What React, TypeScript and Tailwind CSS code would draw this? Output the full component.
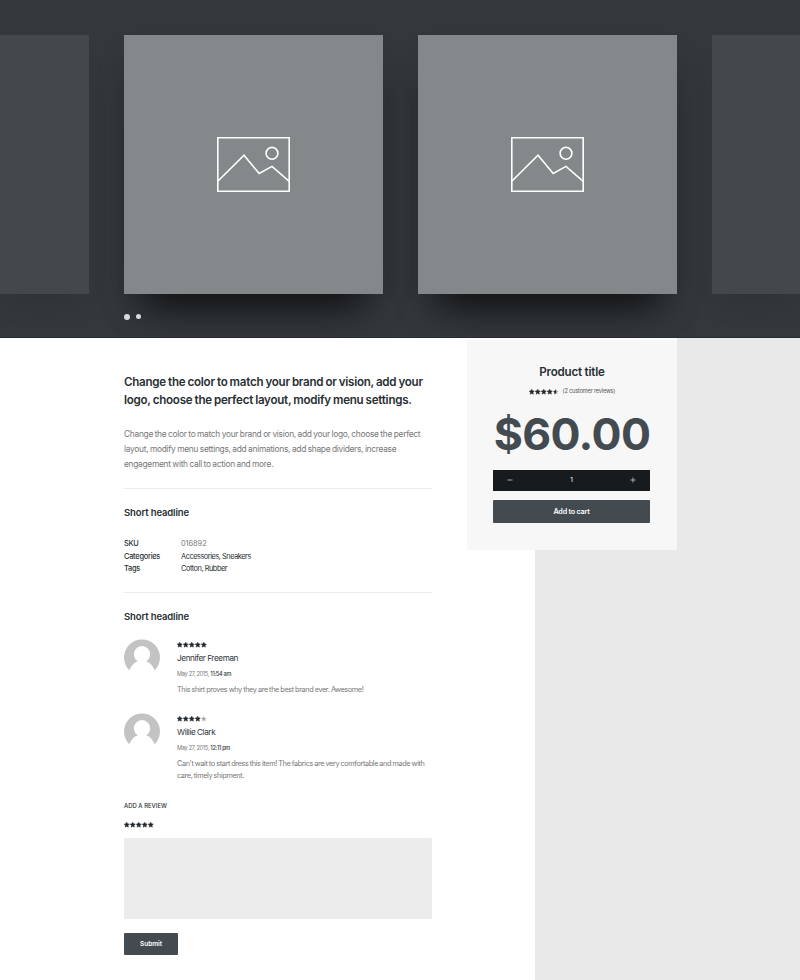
import React from "react";

const STAR = "M5 .4 6.5 3.3 9.7 3.8 7.4 6.1 7.9 9.4 5 7.9 2.1 9.4 2.6 6.1 .3 3.8 3.5 3.3Z";

function Stars({ value = 5 }: { value?: number }) {
  return (
    <span className="flex gap-[0.4px]">
      {[0, 1, 2, 3, 4].map((i) => {
        const half = value - i === 0.5;
        const off = value <= i;
        return (
          <svg key={i} viewBox="0 0 10 10" className="h-[5.5px] w-[5.5px] shrink-0 overflow-visible">
            <path
              d={STAR}
              className={off || half ? "fill-[#a5a8aa]" : "fill-[#23292d]"}
              stroke={off || half ? "none" : "#23292d"}
              strokeWidth=".9"
            />
            {half && <path d="M5.6 .4V7.9L2.1 9.4 2.6 6.1 .3 3.8 3.5 3.3Z" className="fill-[#23292d]" />}
          </svg>
        );
      })}
    </span>
  );
}

function Slide() {
  return (
    <div className="flex h-[259px] w-[259px] shrink-0 items-center justify-center bg-[#83888b] shadow-[0_30px_36px_-22px_rgba(0,0,0,0.75),0_22px_36px_-8px_rgba(0,0,0,0.18)]">
      <svg viewBox="0 0 73 55" className="h-[55px] w-[73px]" fill="none" stroke="#fff" strokeWidth="1.6">
        <path d="M.8 .8H72.2V54.2H.8Z" />
        <path d="M.8 44.3 27 18.2 42.2 36.5 55 29.4 72.2 44.3" />
        <circle cx="55" cy="16.3" r="5.9" />
      </svg>
    </div>
  );
}

function Avatar() {
  return (
    <svg viewBox="0 0 36 36" className="h-9 w-9 shrink-0 overflow-visible">
      <path
        fill="#c3c3c3"
        d="M5.4 30.3A18 18 0 1 1 30.6 30.3C29.2 26.1 26.5 23 22.4 21.2A8.2 8.2 0 1 0 13.6 21.2C9.5 23 6.8 26.1 5.4 30.3Z"
      />
    </svg>
  );
}

function Review({ name, date, time, rating, children }: { name: string; date: string; time: string; rating: number; children: React.ReactNode }) {
  return (
    <article className="flex h-[74px] gap-[17px]">
      <Avatar />
      <div className="whitespace-nowrap pt-0.5">
        <Stars value={rating} />
        <h3 className="mt-[5px] h-3 text-[8.2px] leading-3 tracking-[-0.4px] text-[#30373b] [word-spacing:-0.3px]">{name}</h3>
        <p className="mt-1 h-3 text-[5.6px] leading-3 tracking-[-0.3px] text-[#777]">
          {date}, <span className="font-medium text-[#30373b]">{time}</span>
        </p>
        <p className="mt-[3.5px] text-[7.3px] leading-[12.7px] tracking-[-0.38px] text-[#777] [word-spacing:-0.3px]">{children}</p>
      </div>
    </article>
  );
}

export default function App() {
  return (
    <div className="h-[980px] w-[800px] overflow-hidden bg-white font-['Inter',sans-serif] text-[#282f33]">
      <header className="h-[338px] overflow-hidden border-b border-[#292c31] bg-[#33383c] pt-[35px]">
        <div className="flex gap-[35px]">
          <div className="h-[259px] w-[89px] shrink-0 bg-[#43484b] shadow-[0_18px_30px_-10px_rgba(0,0,0,0.1)]" />
          <Slide />
          <Slide />
          <div className="h-[259px] w-[89px] shrink-0 bg-[#43484b] shadow-[0_18px_30px_-10px_rgba(0,0,0,0.1)]" />
        </div>
        <div className="relative ml-[124px] mt-[19.5px] flex items-center gap-[6px]">
          <i className="h-1.5 w-1.5 rounded-full bg-[#d8dcde]" />
          <i className="h-[5px] w-[5px] rounded-full bg-[#d8dcde]" />
        </div>
      </header>

      <main className="flex h-[642px] bg-[#e9e9e9]">
        <section className="w-[535px] shrink-0 bg-white pl-[124px]">
          <div className="w-[308px] whitespace-nowrap">
            <h1 className="pt-[36px] text-[11.6px] font-semibold leading-[17.5px] tracking-[-0.26px] [word-spacing:-0.5px]">
              Change the color to match your brand or vision, add your
              <br />
              logo, choose the perfect layout, modify menu settings.
            </h1>
            <p className="mt-[18px] h-[62px] border-b border-[#ececec] text-[8.4px] leading-[15px] tracking-[-0.29px] text-[#777] [word-spacing:-0.4px]">
              Change the color to match your brand or vision, add your logo, choose the perfect
              <br />
              layout, modify menu settings, add animations, add shape dividers, increase
              <br />
              engagement with call to action and more.
            </p>
            <h2 className="mt-[17px] text-[9.5px] font-semibold leading-[14px] tracking-[-0.13px]">Short headline</h2>
            <dl className="mt-[18px] grid h-[55px] grid-cols-[57px_1fr] content-start border-b border-[#ececec] text-[7.4px] leading-[12.7px] tracking-[-0.47px]">
              <dt className="font-medium tracking-[-0.25px]">SKU</dt>
              <dd className="tracking-[-0.05px] text-[#777]">016892</dd>
              <dt className="font-medium tracking-[-0.25px]">Categories</dt>
              <dd>Accessories, Sneakers</dd>
              <dt className="font-medium tracking-[-0.25px]">Tags</dt>
              <dd>Cotton, Rubber</dd>
            </dl>
            <h2 className="mt-[16.5px] text-[9.5px] font-semibold leading-[14px] tracking-[-0.13px]">Short headline</h2>
            <div className="mt-4">
              <Review name="Jennifer Freeman" date="May 27, 2015" time="11:54 am" rating={5}>
                This shirt proves why they are the best brand ever. Awesome!
              </Review>
              <Review name="Willie Clark" date="May 27, 2015" time="12:11 pm" rating={4}>
                Can't wait to start dress this item! The fabrics are very comfortable and made with
                <br />
                care, timely shipment.
              </Review>
            </div>
            <h4 className="mt-3 text-[5.9px] font-medium leading-3 tracking-[0.03px]">ADD A REVIEW</h4>
            <div className="mt-[10px]">
              <Stars />
            </div>
            <div className="mt-[11px] h-[81px] rounded-[1px] bg-[#ececec]" />
            <button className="mt-[14px] flex h-[22px] w-[54px] items-center justify-center rounded-[1px] bg-[#434b51] pt-px text-[6.5px] font-semibold text-white">
              Submit
            </button>
          </div>
        </section>

        <aside className="-ml-[68px] flex h-[212px] w-[210px] flex-col items-center whitespace-nowrap border-t-2 border-[#fcfcfc] bg-[#f7f7f7] pt-[23.5px]">
          <h2 className="text-[11.6px] font-semibold leading-4 tracking-[-0.2px]">Product title</h2>
          <div className="mt-[7px] flex h-2 w-[86px] items-center justify-between">
            <span className="pt-0.5">
              <Stars value={4.5} />
            </span>
            <span className="text-[5.7px] leading-2 tracking-[-0.22px] text-[#555]">(2 customer reviews)</span>
          </div>
          <div className="mt-[14.5px] h-[50px] text-[44.5px] font-bold leading-[50px] tracking-[-0.6px] text-[#434b51]">$60.00</div>
          <div className="mr-px mt-[10.5px] flex h-[21px] w-[157px] items-center justify-between bg-[#171b1e] px-[14px] text-[6.5px] text-white">
            <svg viewBox="0 0 6 6" className="h-1.5 w-1.5" stroke="#bbb" strokeWidth=".9">
              <path d="M.5 3H5.5" />
            </svg>
            <span className="pt-px">1</span>
            <svg viewBox="0 0 6 6" className="h-1.5 w-1.5" stroke="#bbb" strokeWidth=".9">
              <path d="M.5 3H5.5M3 .5V5.5" />
            </svg>
          </div>
          <button className="mr-px mt-[9px] flex h-[23.5px] w-[157px] items-center justify-center rounded-[1px] bg-[#434b51] pt-0.5 text-[7.2px] font-semibold tracking-[-0.22px] text-white">
            Add to cart
          </button>
        </aside>
      </main>
    </div>
  );
}
